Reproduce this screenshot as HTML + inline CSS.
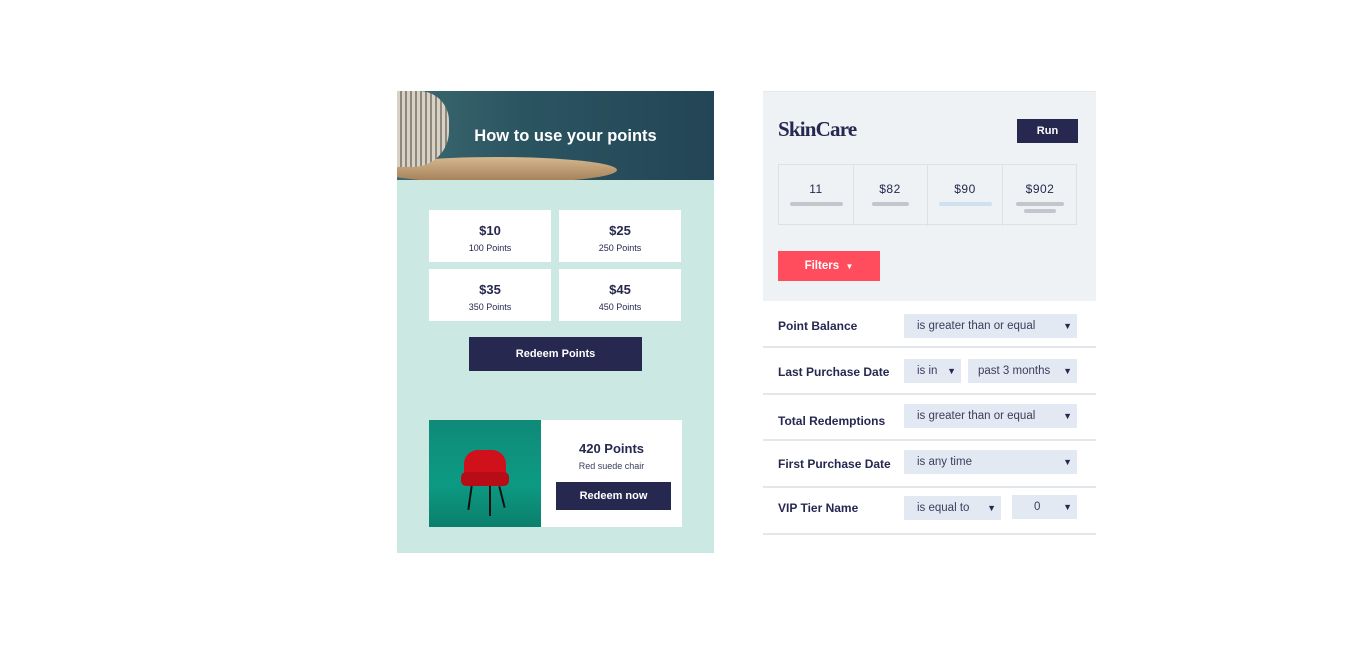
<!DOCTYPE html>
<html><head><style>
body{margin:0;width:1350px;height:645px;background:#fff;font-family:"Liberation Sans",sans-serif;position:relative;overflow:hidden;color:#262850}
.a{position:absolute}
.tile{position:absolute;background:#fff;width:122px;height:52px;text-align:center}
.tile b{display:block;font-size:13px;margin-top:13px}
.tile span{display:block;font-size:9px;margin-top:5px}
.btn{position:absolute;background:#262850;color:#fff;font-weight:bold;text-align:center}
.row{position:absolute;left:763px;width:333px;border-bottom:2px solid #e3e6ea}
.lbl{position:absolute;left:15px;font-size:12px;font-weight:bold}
.sel{position:absolute;background:#e3e9f3;height:24px;font-size:11.5px;line-height:24px;color:#3a3d5c}
.sel i{position:absolute;right:5px;font-style:normal;font-size:9px;color:#262850}
.cell{position:absolute;top:0;width:74px;height:61px;border-right:1px solid #dde1e6;text-align:center;font-size:12px}
.cell .t{margin-top:17px;line-height:14px;letter-spacing:0.5px}
.cell .bar{height:4px;border-radius:2px;background:#c4c6cd;margin:6px auto 0}
</style></head><body>
<!-- left card -->
<div class="a" style="left:397px;top:91px;width:317px;height:462px;background:#cce8e3"></div>
<div class="a" style="left:397px;top:91px;width:317px;height:89px;background:linear-gradient(90deg,#3c6a70 0%,#2b5461 40%,#234556 100%);overflow:hidden">
 <div class="a" style="left:-20px;top:66px;width:240px;height:26px;border-radius:50%;background:linear-gradient(180deg,#d6b78e,#a07c55)"></div>
 <div class="a" style="left:0;top:0;width:52px;height:76px;border-radius:0 30px 36px 0;background:repeating-linear-gradient(90deg,#d8d2c4 0 3px,#8c887e 3px 5px)"></div>
 <div class="a" style="left:10px;top:36px;width:317px;text-align:center;color:#fff;font-weight:bold;font-size:16.5px">How to use your points</div>
</div>
<div class="tile" style="left:429px;top:210px"><b>$10</b><span>100 Points</span></div>
<div class="tile" style="left:559px;top:210px"><b>$25</b><span>250 Points</span></div>
<div class="tile" style="left:429px;top:269px"><b>$35</b><span>350 Points</span></div>
<div class="tile" style="left:559px;top:269px"><b>$45</b><span>450 Points</span></div>
<div class="btn" style="left:469px;top:337px;width:173px;height:34px;line-height:34px;font-size:11px">Redeem Points</div>
<div class="a" style="left:429px;top:420px;width:253px;height:107px;background:#fff"></div>
<div class="a" style="left:429px;top:420px;width:112px;height:107px;background:linear-gradient(180deg,#0f8a78,#0c9a83 60%,#0b7f6c);overflow:hidden">
 <div class="a" style="left:35px;top:30px;width:42px;height:34px;background:#d0101a;border-radius:14px 14px 4px 4px"></div>
 <div class="a" style="left:32px;top:52px;width:48px;height:14px;background:#b80d16;border-radius:5px"></div>
 <div class="a" style="left:40px;top:66px;width:2px;height:24px;background:#111;transform:rotate(8deg)"></div>
 <div class="a" style="left:72px;top:66px;width:2px;height:22px;background:#111;transform:rotate(-14deg)"></div>
 <div class="a" style="left:60px;top:66px;width:2px;height:30px;background:#111"></div>
</div>
<div class="a" style="left:541px;top:441px;width:141px;text-align:center;font-weight:bold;font-size:13px">420 Points</div>
<div class="a" style="left:541px;top:461px;width:141px;text-align:center;font-size:9px;color:#3a3d5c">Red suede chair</div>
<div class="btn" style="left:556px;top:482px;width:115px;height:28px;line-height:28px;font-size:11px">Redeem now</div>
<!-- right panel -->
<div class="a" style="left:763px;top:91px;width:333px;height:209px;background:#eef2f5;border-top:1px solid #e6e9ec"></div>
<div class="a" style="left:778px;top:117px;font-family:'Liberation Serif',serif;font-weight:bold;font-size:21px;letter-spacing:-0.8px">SkinCare</div>
<div class="btn" style="left:1017px;top:119px;width:61px;height:24px;line-height:24px;font-size:11px">Run</div>
<div class="a" style="left:778px;top:164px;width:299px;height:61px;border:1px solid #dde1e6;box-sizing:border-box">
 <div class="cell" style="left:0"><div class="t">11</div><div class="bar" style="width:53px"></div></div>
 <div class="cell" style="left:74px"><div class="t">$82</div><div class="bar" style="width:37px"></div></div>
 <div class="cell" style="left:149px"><div class="t">$90</div><div class="bar" style="width:53px;background:#cfe0ee"></div></div>
 <div class="cell" style="left:224px;border:none"><div class="t">$902</div><div class="bar" style="width:48px"></div><div class="bar" style="width:32px;margin-top:3px"></div></div>
</div>
<div class="a" style="left:778px;top:251px;width:102px;height:30px;background:#ff4d5e;color:#fff;font-weight:bold;font-size:11.5px;line-height:30px;text-align:center">Filters &nbsp;<span style="font-size:8px">▼</span></div>
<div class="row" style="top:300px;height:46px"><div class="lbl" style="top:19px">Point Balance</div><div class="sel" style="left:141px;top:14px;width:173px;padding-left:13px;box-sizing:border-box">is greater than or equal<i>▼</i></div></div>
<div class="row" style="top:348px;height:45px"><div class="lbl" style="top:17px">Last Purchase Date</div><div class="sel" style="left:141px;top:11px;width:57px;padding-left:13px;box-sizing:border-box">is in<i>▼</i></div><div class="sel" style="left:205px;top:11px;width:109px;padding-left:10px;box-sizing:border-box">past 3 months<i>▼</i></div></div>
<div class="row" style="top:395px;height:44px"><div class="lbl" style="top:19px">Total Redemptions</div><div class="sel" style="left:141px;top:9px;width:173px;padding-left:13px;box-sizing:border-box">is greater than or equal<i>▼</i></div></div>
<div class="row" style="top:441px;height:45px"><div class="lbl" style="top:16px">First Purchase Date</div><div class="sel" style="left:141px;top:9px;width:173px;padding-left:13px;box-sizing:border-box">is any time<i>▼</i></div></div>
<div class="row" style="top:488px;height:45px"><div class="lbl" style="top:13px">VIP Tier Name</div><div class="sel" style="left:141px;top:8px;width:97px;padding-left:13px;box-sizing:border-box">is equal to<i>▼</i></div><div class="sel" style="left:249px;top:7px;width:65px;padding-left:22px;box-sizing:border-box">0<i>▼</i></div></div>
</body></html>
